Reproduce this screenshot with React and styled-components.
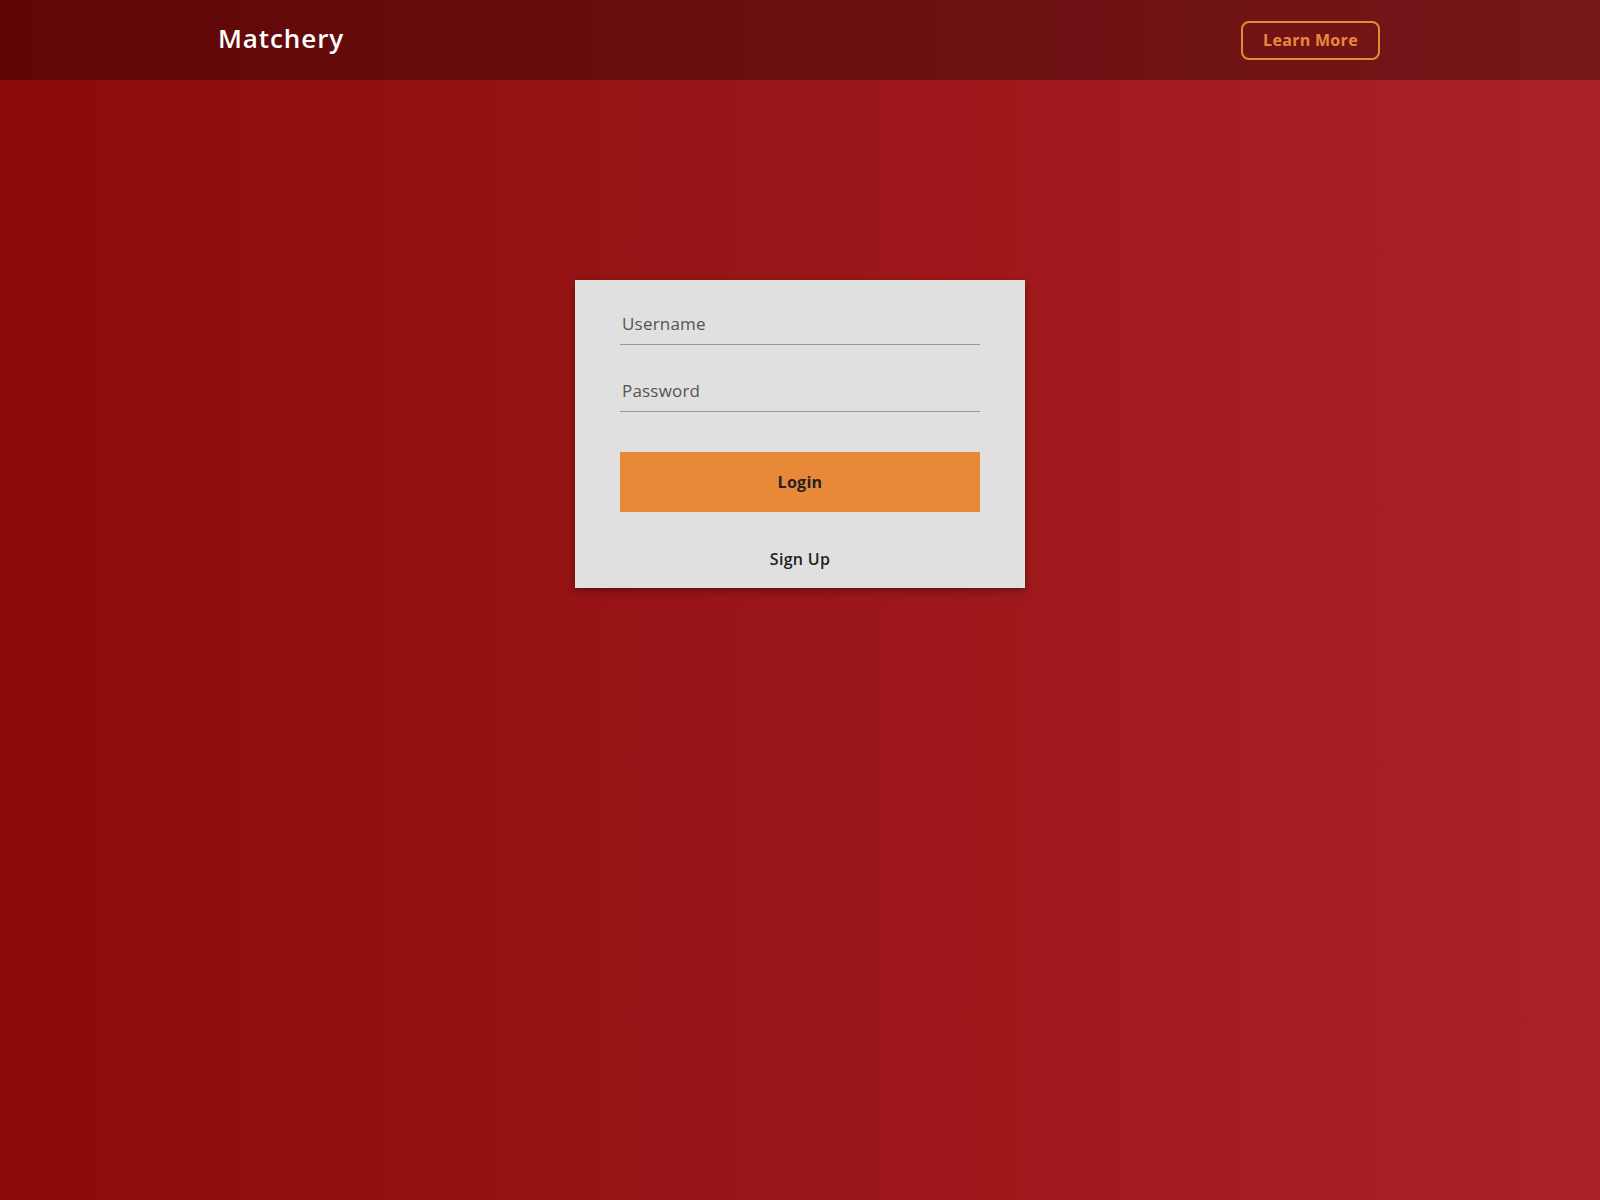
import React, { useState } from 'react';
import styled, { createGlobalStyle } from 'styled-components';

const GlobalStyle = createGlobalStyle`
  html, body {
    margin: 0;
    padding: 0;
  }
  body {
    font-family: "Open Sans", "DejaVu Sans", sans-serif;
    background: linear-gradient(90deg, #8b0a0a 0%, #ab2226 100%);
    min-height: 1200px;
  }
  * {
    box-sizing: border-box;
  }
`;

const Page = styled.div`
  min-height: 1200px;
  display: flex;
  flex-direction: column;
`;

const Header = styled.header`
  height: 80px;
  background: rgba(0, 0, 0, 0.31);
  display: flex;
  justify-content: center;
`;

const HeaderInner = styled.div`
  width: 1160px;
  display: flex;
  align-items: center;
  justify-content: space-between;
`;

const Logo = styled.div`
  color: #ffffff;
  font-size: 26px;
  font-weight: 600;
  letter-spacing: 0.9px;
  margin-top: -5px;
  margin-left: -2px;
`;

const OutlineButton = styled.button`
  height: 39px;
  width: 139px;
  border: 2px solid #e8893a;
  border-radius: 8px;
  background: transparent;
  color: #e8893a;
  font-family: inherit;
  font-size: 16px;
  font-weight: 700;
  letter-spacing: 0.3px;
  cursor: pointer;
`;

const Main = styled.main`
  display: flex;
  justify-content: center;
  padding-top: 200px;
`;

const Card = styled.form`
  width: 450px;
  background: #e0e0e0;
  padding: 24px 45px 0;
  box-shadow: 0 3px 8px rgba(0, 0, 0, 0.35);
  display: flex;
  flex-direction: column;
`;

const Field = styled.input`
  width: 100%;
  border: none;
  border-bottom: 1px solid #999;
  background: transparent;
  font-family: inherit;
  font-size: 17px;
  font-weight: 400;
  letter-spacing: 0.2px;
  color: #555;
  padding: 8px 2px 9px;
  margin-bottom: ${(p) => p.$gap || 0}px;
  outline: none;

  &::placeholder {
    color: #555;
  }
`;

const SubmitButton = styled.button`
  appearance: none;
  display: block;
  width: 100%;
  height: 60px;
  border: 0;
  border-radius: 0;
  box-shadow: none;
  outline: none;
  background-color: #e8893a;
  color: #222;
  font-family: inherit;
  font-size: 16px;
  font-weight: 700;
  letter-spacing: 0.3px;
  cursor: pointer;
`;

const LinkButton = styled.button`
  border: none;
  background: transparent;
  color: #222;
  font-family: inherit;
  font-size: 16px;
  font-weight: 600;
  letter-spacing: 0.3px;
  line-height: 20px;
  padding: 37px 0 19px;
  cursor: pointer;
`;

const App = () => {
  const [username, setUsername] = useState('');
  const [password, setPassword] = useState('');

  return (
    <Page>
      <GlobalStyle />
      <Header>
        <HeaderInner>
          <Logo>Matchery</Logo>
          <OutlineButton type="button">Learn More</OutlineButton>
        </HeaderInner>
      </Header>
      <Main>
        <Card onSubmit={(e) => e.preventDefault()}>
          <Field
            placeholder="Username"
            value={username}
            onChange={(e) => setUsername(e.target.value)}
            $gap={26}
          />
          <Field
            type="password"
            placeholder="Password"
            value={password}
            onChange={(e) => setPassword(e.target.value)}
            $gap={40}
          />
          <SubmitButton type="submit">Login</SubmitButton>
          <LinkButton type="button">Sign Up</LinkButton>
        </Card>
      </Main>
    </Page>
  );
};

export default App;
